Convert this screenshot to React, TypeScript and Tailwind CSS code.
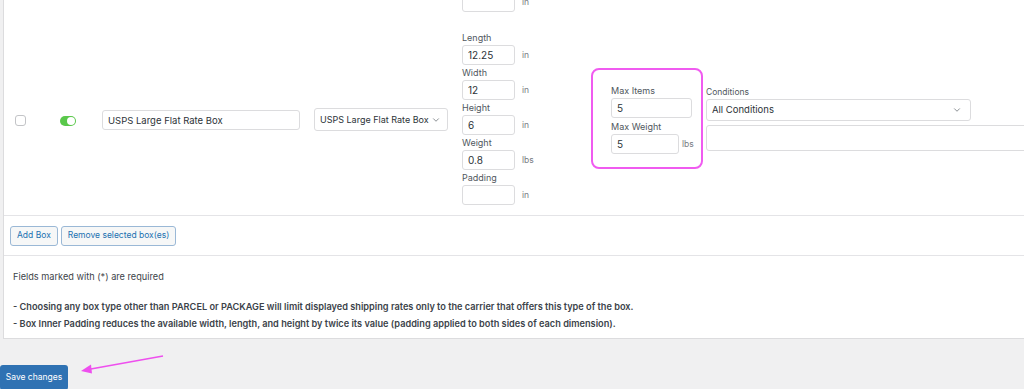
import { ChevronDown } from 'lucide-react';

const font = "font-['Inter','Liberation_Sans',sans-serif]";

function Field({ label, value, unit }: { label: string; value?: string; unit: string }) {
  return (
    <div className="flex flex-col">
      <span className="h-[14px] text-[9px] leading-[14px] text-[#50575e]">{label}</span>
      <div className="flex items-center">
        <input
          readOnly
          value={value ?? ''}
          className="h-[20px] w-[53px] shrink-0 rounded-[3px] border border-[#dcdcde] bg-white px-[5px] text-[10px] text-[#2c3338] outline-none"
        />
        <span className="ml-[7px] text-[8.5px] text-[#787c82]">{unit}</span>
      </div>
    </div>
  );
}

export default function App() {
  return (
    <div className={`relative h-[389px] w-[1024px] overflow-hidden bg-[#f0f0f1] ${font}`}>
      <section className="ml-[3px] w-[1040px] border-b border-l border-[#dcdcde] bg-white">
        {/* box row */}
        <div className="flex h-[216px] items-start border-b border-[#e4e4e7]">
          <span className="ml-[11px] mt-[115px] h-[11px] w-[11px] shrink-0 rounded-[3px] border border-[#c3c4c7]" />
          <span className="ml-[34px] mt-[116px] flex h-[10px] w-[16px] shrink-0 items-center justify-end rounded-full bg-[#5ac84b] pr-[1px]">
            <span className="h-[8px] w-[8px] rounded-full bg-white" />
          </span>
          <input
            readOnly
            value="USPS Large Flat Rate Box"
            className="ml-[26px] mt-[110px] h-[20px] w-[198px] shrink-0 rounded-[3px] border border-[#dcdcde] px-[5px] text-[9.5px] text-[#2c3338] outline-none"
          />
          <div className="ml-[14px] mt-[108px] flex h-[23px] w-[134px] shrink-0 items-center justify-between whitespace-nowrap rounded-[3px] border border-[#dcdcde] pl-[5px] pr-[6px] text-[9px] text-[#2c3338]">
            <span>USPS Large Flat Rate Box</span>
            <ChevronDown size={10} strokeWidth={1.6} className="text-[#50575e]" />
          </div>

          {/* dimensions */}
          <div className="ml-[14px] -mt-[8px] flex w-[75px] shrink-0 flex-col gap-[1px]">
            <div className="mb-[18px] flex items-center">
              <input readOnly className="h-[20px] w-[53px] shrink-0 rounded-[3px] border border-[#dcdcde] outline-none" />
              <span className="ml-[7px] text-[8.5px] text-[#787c82]">in</span>
            </div>
            <Field label="Length" value="12.25" unit="in" />
            <Field label="Width" value="12" unit="in" />
            <Field label="Height" value="6" unit="in" />
            <Field label="Weight" value="0.8" unit="lbs" />
            <Field label="Padding" unit="in" />
          </div>

          {/* limits */}
          <div className="ml-[54px] mt-[68px] flex h-[101px] w-[112px] shrink-0 flex-col rounded-[8px] border-2 border-[#f05bf0] pl-[18px] pt-[14px]">
            <span className="h-[14px] text-[9px] leading-[14px] text-[#50575e]">Max Items</span>
            <input
              readOnly
              value="5"
              className="h-[20px] w-[81px] rounded-[3px] border border-[#dcdcde] px-[5px] text-[10px] text-[#2c3338] outline-none"
            />
            <span className="mt-[2px] h-[14px] text-[9px] leading-[14px] text-[#50575e]">Max Weight</span>
            <div className="flex items-center">
              <input
                readOnly
                value="5"
                className="h-[20px] w-[68px] shrink-0 rounded-[3px] border border-[#dcdcde] px-[5px] text-[10px] text-[#2c3338] outline-none"
              />
              <span className="ml-[3px] text-[8.5px] text-[#787c82]">lbs</span>
            </div>
          </div>

          {/* conditions */}
          <div className="ml-[3px] mt-[86px] flex shrink-0 flex-col">
            <span className="h-[13px] text-[8.5px] leading-[13px] text-[#50575e]">Conditions</span>
            <div className="flex h-[22px] w-[265px] items-center justify-between rounded-[3px] border border-[#dcdcde] pl-[5px] pr-[8px] text-[9.5px] text-[#2c3338]">
              <span>All Conditions</span>
              <ChevronDown size={10} strokeWidth={1.6} className="text-[#50575e]" />
            </div>
            <div className="mt-[4px] h-[26px] w-[330px] rounded-[3px] border border-[#dcdcde]" />
          </div>
        </div>

        {/* actions */}
        <div className="flex h-[40px] items-center gap-[3px] border-b border-[#e4e4e7] pl-[6px]">
          <button className="h-[20px] rounded-[3px] border border-[#9ab8d6] bg-[#f6f7f7] px-[6px] text-[8.5px] text-[#2271b1]">
            Add Box
          </button>
          <button className="h-[20px] rounded-[3px] border border-[#9ab8d6] bg-[#f6f7f7] px-[6px] text-[8.5px] text-[#2271b1]">
            Remove selected box(es)
          </button>
        </div>

        {/* notes */}
        <div className="h-[82px] pl-[9px] pt-[14px] text-[9.2px] text-[#3c434a]">
          <p className="leading-[14px]">Fields marked with (*) are required</p>
          <p className="mt-[14px] font-semibold leading-[17px]">
            - Choosing any box type other than PARCEL or PACKAGE will limit displayed shipping rates only to the carrier that offers this type of the box.
          </p>
          <p className="font-semibold leading-[17px]">
            - Box Inner Padding reduces the available width, length, and height by twice its value (padding applied to both sides of each dimension).
          </p>
        </div>
      </section>

      <div className="mt-[23px]">
        <button className="h-[25px] w-[68px] rounded-[3px] bg-[#2f72b3] text-[8.5px] text-white">Save changes</button>
      </div>

      {/* annotation arrow */}
      <svg className="absolute left-0 top-0" width="1024" height="389" viewBox="0 0 1024 389">
        <line x1="163" y1="356" x2="88" y2="369.5" stroke="#ee4fee" strokeWidth="1.6" />
        <polygon points="81,371 91,364.5 92,373.5" fill="#ee4fee" />
      </svg>
    </div>
  );
}
